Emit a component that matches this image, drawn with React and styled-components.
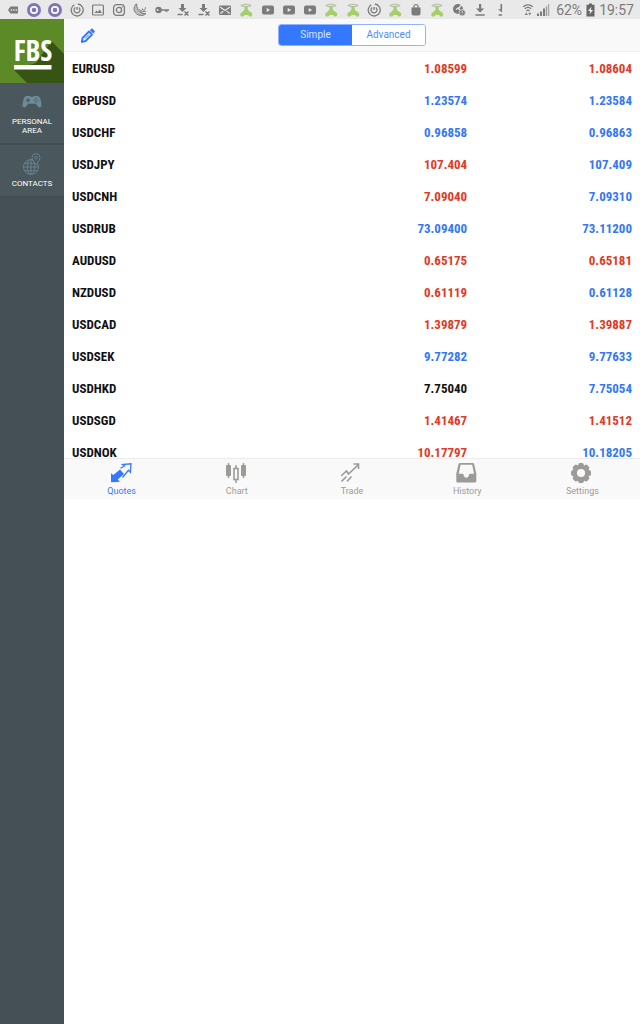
import { useState } from "react";
import styled, { createGlobalStyle } from "styled-components";

const GlobalStyle = createGlobalStyle`
  *, *::before, *::after {
    box-sizing: border-box;
  }
  body {
    margin: 0;
    background-color: #ffffff;
    font-family: Roboto, "Liberation Sans", sans-serif;
  }
  svg {
    display: block;
    flex: none;
  }
`;

const Page = styled.div`
  display: flex;
  flex-direction: column;
  width: 100%;
  min-height: 100vh;
`;

const StatusBar = styled.header`
  display: flex;
  align-items: center;
  height: 19px;
  padding: 0 6px;
  background-color: #e9e9e9;
  color: #7b7b7b;
`;

const Notifications = styled.div`
  display: flex;
  flex: 1;
  justify-content: space-between;
`;

const SystemInfo = styled.div`
  display: flex;
  align-items: center;
  gap: 4px;
  margin-left: 13px;
`;

const Reception = styled.div`
  display: flex;
  gap: 1px;
  padding-right: 2px;
`;

const SystemText = styled.span`
  font-size: 14px;
  line-height: 19px;
  padding-top: 1px;
`;

const Layout = styled.div`
  display: flex;
  flex: 1;
`;

const Sidebar = styled.nav`
  display: flex;
  flex-direction: column;
  flex: none;
  width: 64px;
  background-color: #445055;
`;

const Logo = styled.a`
  display: block;
  height: 64px;
`;

const SideLink = styled.a`
  display: flex;
  flex-direction: column;
  align-items: center;
  gap: 4px;
  padding: 8px 0;
  border-bottom: 2px solid #414d52;
  background-color: #4a585e;
  color: #ffffff;
  font-size: 8px;
  line-height: 9px;
  text-align: center;
  text-decoration: none;
`;

const Terminal = styled.main`
  display: flex;
  flex: 1;
  flex-direction: column;
  height: 480px;
  min-width: 0;
`;

const Toolbar = styled.div`
  display: grid;
  grid-template-columns: 1fr auto 1fr;
  align-items: center;
  height: 33px;
  padding: 0 16px;
  border-bottom: 1px solid #efefef;
  background-color: #f9f9f9;
`;

const EditButton = styled.button`
  justify-self: start;
  padding: 0;
  border: none;
  background: none;
  cursor: pointer;
`;

const Segmented = styled.div`
  display: flex;
  width: 148px;
  height: 22px;
  border: 1px solid #8fb4ff;
  border-radius: 3px;
  overflow: hidden;
`;

const Segment = styled.button`
  flex: 1;
  padding: 0;
  border: none;
  background-color: ${(props) => (props.$active ? "#3478ff" : "#ffffff")};
  color: ${(props) => (props.$active ? "#dbe7ff" : "#4f8aff")};
  font-family: inherit;
  font-size: 10px;
  line-height: 18px;
  cursor: pointer;
`;

const QuoteList = styled.div`
  flex: 1;
  min-height: 0;
  overflow: hidden;
`;

const QuoteTable = styled.table`
  width: 100%;
  table-layout: fixed;
  border-collapse: collapse;
  font-family: "Liberation Sans Narrow", "Roboto Condensed", Roboto, sans-serif;
  font-size: 13px;
  font-weight: 700;
  line-height: 16px;
`;

const SymbolCell = styled.th`
  width: 42%;
  height: 32px;
  padding: 1px 0 0 8px;
  color: #111111;
  text-align: left;
`;

const priceColors = { up: "#3478f6", down: "#e03a24", flat: "#111111" };

const PriceCell = styled.td`
  width: ${(props) => props.$width};
  padding: 1px ${(props) => props.$inset || "0"} 0 0;
  color: ${(props) => priceColors[props.$trend]};
  text-align: right;
`;

const TabBar = styled.nav`
  display: flex;
  flex: none;
  height: 41px;
  border-top: 1px solid #ececec;
  background-color: #f9f9f9;
`;

const Tab = styled.button`
  display: flex;
  flex: 1;
  flex-direction: column;
  align-items: center;
  gap: 1px;
  padding: 3px 0 0;
  border: none;
  background: none;
  color: ${(props) => (props.$active ? "#3478ff" : "#9c9b97")};
  font-family: inherit;
  font-size: 9px;
  line-height: 12px;
  cursor: pointer;
`;

const quotes = [
  ["EURUSD", "1.08599", "down", "1.08604", "down"],
  ["GBPUSD", "1.23574", "up", "1.23584", "up"],
  ["USDCHF", "0.96858", "up", "0.96863", "up"],
  ["USDJPY", "107.404", "down", "107.409", "up"],
  ["USDCNH", "7.09040", "down", "7.09310", "up"],
  ["USDRUB", "73.09400", "up", "73.11200", "up"],
  ["AUDUSD", "0.65175", "down", "0.65181", "down"],
  ["NZDUSD", "0.61119", "down", "0.61128", "up"],
  ["USDCAD", "1.39879", "down", "1.39887", "down"],
  ["USDSEK", "9.77282", "up", "9.77633", "up"],
  ["USDHKD", "7.75040", "flat", "7.75054", "up"],
  ["USDSGD", "1.41467", "down", "1.41512", "down"],
  ["USDNOK", "10.17797", "down", "10.18205", "up"],
];

/* status bar glyphs, all on a 14px grid */
const glyphs = {
  more: (
    <>
      <path d="M2 7 4.5 3.5H12v7H4.5Z" fill="currentColor" />
      <path d="M4.800 7h1.4M7.200 7h1.4M9.600 7h1.400" stroke="#e9e9e9" strokeWidth="1.4" />
    </>
  ),
  viber: (
    <>
      <circle cx="7" cy="7" r="7" fill="#8174b8" />
      <circle cx="7" cy="7" r="3.2" fill="none" stroke="#ffffff" strokeWidth="1.7" />
    </>
  ),
  power: (
    <g fill="none" stroke="currentColor" strokeWidth="1.3">
      <path d="M7.800 1a6 6 0 1 1-3.500.7" />
      <path d="M5.200 4.500a3 3 0 1 0 3.600 0M7 4v3" />
    </g>
  ),
  image: (
    <>
      <rect x="1.6" y="2" width="10.8" height="10" rx="1" fill="none" stroke="currentColor" strokeWidth="1.2" />
      <path d="m3.5 10 2-2.6 1.4 1.5 1.8-2.4L11 10Z" fill="currentColor" />
    </>
  ),
  camera: (
    <g fill="none" stroke="currentColor" strokeWidth="1.3">
      <rect x="1.6" y="1.6" width="10.8" height="10.8" rx="3" />
      <circle cx="7" cy="7" r="2.6" />
      <path d="M9.7 4.2h1" />
    </g>
  ),
  moon: (
    <g fill="none" stroke="currentColor" strokeWidth="1">
      <path d="M3.500.8C-.5 4 .5 10 5.500 12c3 1 6 .3 7.500-1.500C8 11.500 4 7.500 3.500.8Z" fill="currentColor" fillOpacity=".4" />
      <path d="M6.500 6c.5 2.500 3 2 3-.2 0 2 3 2 3-1.500M7 9.200l6-1" />
    </g>
  ),
  key: (
    <>
      <circle cx="3.500" cy="7" r="3.200" fill="currentColor" />
      <circle cx="2.600" cy="7" r=".9" fill="#e9e9e9" />
      <path d="M6 7h8M11.500 7v2" stroke="currentColor" strokeWidth="1.700" />
    </>
  ),
  failed: (
    <>
      <path d="M5 1h3v4h2.500l-4 4-4-4H5Z" fill="currentColor" />
      <path d="M1.500 11.500h5M8.500 8.500l4 4m0-4-4 4" fill="none" stroke="currentColor" strokeWidth="1.400" />
    </>
  ),
  mail: (
    <>
      <rect x="1" y="2.500" width="12" height="9.500" rx="1" fill="currentColor" />
      <path d="m2 4 5 3.500L12 4M2.300 10.500l3-2.300M11.700 10.500l-3-2.300" fill="none" stroke="#e9e9e9" strokeWidth="1.200" />
    </>
  ),
  rider: (
    <>
      <path d="M1.300 2.600C3 0 11 0 12.700 2.600 11 5 3 5 1.300 2.600Z" fill="#b4c4a4" />
      <path d="M4 2.300h6" stroke="#dfe6d9" />
      <path d="M5.300 4h3.200l.4 3 2.600 2c2.400.6 2.400 4.500 0 4.600-1.300 0-2-.8-2.400-1.600H5.500c-.4 1-1.200 1.600-2.400 1.600-2.400-.2-2.400-3.800.2-4.600l2.300-2.500Z" fill="#a5cf6b" />
    </>
  ),
  video: (
    <>
      <rect x="1" y="2.500" width="12" height="9" rx="2" fill="currentColor" />
      <path d="m5.700 5 3.500 2-3.500 2Z" fill="#e9e9e9" />
    </>
  ),
  bag: (
    <>
      <path d="M2.500 4.500h9v6a2 2 0 0 1-2 2h-5a2 2 0 0 1-2-2Z" fill="currentColor" />
      <path d="M5 5V3.500a2 2 0 0 1 4 0V5" fill="none" stroke="currentColor" strokeWidth="1.200" />
    </>
  ),
  disc: (
    <>
      <circle cx="6" cy="6" r="5" fill="currentColor" />
      <path d="M6 6 10 1.500M4 6.500 6 5l2 2" fill="none" stroke="#e9e9e9" strokeWidth="1.200" />
      <circle cx="10.200" cy="9.800" r="3.200" fill="currentColor" stroke="#e9e9e9" strokeWidth=".8" />
      <path d="M10.200 8v2M10.200 10.700v.8" stroke="#e9e9e9" />
    </>
  ),
  download: (
    <>
      <path d="M6 1h2.200v4.500h3L7.100 9.600 3 5.500h3Z" fill="currentColor" />
      <path d="M2.500 12h9.200" stroke="currentColor" strokeWidth="1.500" />
    </>
  ),
  partial: (
    <path d="M6.500 1h1.600v8.600L4 6.200h2.500ZM4.500 11.200h3.600v1.500H4.500Z" fill="currentColor" />
  ),
  wifi: (
    <>
      <path d="M2.200 3.700c2.700-2.500 6.900-2.500 9.600 0M3.800 5.800c1.900-1.700 4.500-1.700 6.400 0M5.400 7.800c1-.9 2.200-.9 3.200 0" fill="none" stroke="currentColor" strokeWidth="1.200" />
      <path d="m3.800 12 1.500-2.700L6.800 12ZM7.200 9.800h3l-1.500 2.700Z" fill="currentColor" />
    </>
  ),
  signal: (
    <>
      <path d="M1 10.500h2V13H1ZM4 8.500h2V13H4ZM7 5.500h2V13H7Z" fill="currentColor" />
      <path d="M9.800 3.200h1.400v9.800H9.800ZM12.200 1h1v12h-1Z" fill="#9a9a9a" />
    </>
  ),
};

const notifications = [
  "more", "viber", "viber", "power", "image", "camera", "moon", "key",
  "failed", "failed", "mail", "rider", "video", "video", "video", "rider",
  "rider", "power", "rider", "bag", "rider", "disc", "download", "partial",
];

const Glyph = ({ name }) => (
  <svg width="14" height="14" viewBox="0 0 14 14" aria-hidden="true">
    {glyphs[name]}
  </svg>
);

const BatteryIcon = () => (
  <svg width="9" height="14" viewBox="0 0 9 14" aria-hidden="true">
    <path d="M3 .5h3v1.300h2.500v11.700H.5V1.800H3Z" fill="#666666" />
    <path d="M5.500 3.500 2 8h2.200l-.7 3.500L7 6.900H4.800Z" fill="#f4f4f4" />
  </svg>
);

const LogoMark = () => (
  <svg width="64" height="64" viewBox="0 0 64 64" role="img" aria-label="FBS">
    <rect width="64" height="64" fill="#5c8a26" />
    <path d="M14 51 27 64h37V35L51.500 22 36 44Z" fill="#365414" />
    <text
      x="33"
      y="42"
      textAnchor="middle"
      fontFamily="'Open Sans Condensed', 'Roboto Condensed', 'Liberation Sans Narrow', 'Open Sans', sans-serif"
      fontWeight="700"
      fontSize="29"
      fill="#ffffff"
    >
      FBS
    </text>
    <rect x="14" y="46" width="37.500" height="4.500" fill="#ffffff" />
  </svg>
);

const GamepadIcon = () => (
  <svg width="20" height="22" viewBox="0 0 20 22" aria-hidden="true">
    <path
      d="M5 5h2.500c.8 0 1 .8 2.500.8s1.700-.8 2.500-.8H15c2 0 2.900 1.200 3.500 3.500.5 2 1.300 5 .8 6.800-.4 1.500-2.300 1.500-3.300.3l-2.200-2.800H6.200L4 15.600c-1 1.200-2.900 1.200-3.300-.3C.2 13.500 1 10.500 1.500 8.500 2.100 6.200 3 5 5 5Z"
      fill="#6b8b99"
    />
    <path d="M6 7.300v4M4 9.300h4" stroke="#4a585e" strokeWidth="1.300" />
    <g fill="#4a585e">
      <circle cx="14.200" cy="7.600" r=".8" />
      <circle cx="14.200" cy="11" r=".8" />
      <circle cx="12.500" cy="9.300" r=".8" />
      <circle cx="16" cy="9.300" r=".8" />
    </g>
  </svg>
);

const GlobeIcon = () => (
  <svg width="20" height="22" viewBox="0 0 20 22" aria-hidden="true">
    <g fill="none" stroke="#66818d" strokeWidth="1">
      <circle cx="9" cy="14" r="7.500" />
      <ellipse cx="9" cy="14" rx="3.700" ry="7.500" />
      <path d="M9 6.500v15M1.500 14h15M2.500 10.300h13M2.500 17.700h13" />
      <path
        d="M14 12C11.500 8 10 6.500 10 4.600a4 4 0 0 1 8 0c0 1.900-1.500 3.400-4 7.400Z"
        fill="#4a585e"
      />
      <circle cx="14" cy="4.600" r="1.300" />
    </g>
  </svg>
);

const PencilIcon = () => (
  <svg width="15" height="16" viewBox="0 0 15 16" aria-hidden="true">
    <path d="M1.800 14.800 2.500 11 9 4.500l3 3L5.600 14Z" fill="none" stroke="#3478ff" strokeWidth="1.800" strokeLinejoin="round" />
    <path d="m5 11.500 4-4" stroke="#3478ff" strokeWidth="1" />
    <path d="m9.800 3.200 1.300-1.300c.5-.5 1.100-.5 1.600 0l1.800 1.800c.5.500.5 1.100 0 1.600l-1.300 1.300Z" fill="#3478ff" />
    <path d="m1 15.800.6-3 2.300 2.300Z" fill="#3478ff" />
  </svg>
);

const QuotesIcon = () => (
  <svg width="22" height="22" viewBox="1 0 22 22" aria-hidden="true">
    <path d="M1 20.200v-9L3.300 13l6.700-5.500 4 4.500-6.300 5.500 2.300 2.200Z" fill="currentColor" />
    <path
      d="m10.500 6.300 4-2.300-2-1.500 8.500-.7-.6 8.500-2-2-5.900 7.200"
      fill="none"
      stroke="currentColor"
      strokeWidth="1.300"
    />
  </svg>
);

const ChartIcon = () => (
  <svg width="22" height="22" viewBox="1 0 22 22" aria-hidden="true">
    <path d="M3.500 1v15M18.500 1v15M11 3v4M11 17v4" stroke="currentColor" strokeWidth="1.500" />
    <rect x="1" y="3" width="5" height="11" rx="1" fill="currentColor" />
    <rect x="16" y="3" width="5" height="11" rx="1" fill="currentColor" />
    <rect x="9" y="6.500" width="4" height="11" fill="none" stroke="currentColor" strokeWidth="1.600" />
  </svg>
);

const TradeIcon = () => (
  <svg width="22" height="22" viewBox="1 0 22 22" aria-hidden="true">
    <path
      d="m1 14 5.500-5 2 3L18.500 2.500M13.500 2h5v5M1.500 19.500l5-5M7 19.500l4.500-5"
      fill="none"
      stroke="currentColor"
      strokeWidth="1.600"
    />
  </svg>
);

const HistoryIcon = () => (
  <svg width="22" height="22" viewBox="0 0 22 22" aria-hidden="true">
    <path
      fillRule="evenodd"
      d="M4.500 1h12c1 0 1.500.5 1.700 1.300L20.300 11.500V19c0 1-.6 1.500-1.500 1.500h-17C.900 20.500.3 20 .3 19v-7.500l2.200-9.200C2.700 1.500 3.500 1 4.500 1Zm.1 1.800L2.700 11.800h3.800c.5 0 .8.300 1 .8.300 2 1.300 3.200 2.800 3.200s2.500-1.200 2.800-3.200c.2-.5.5-.8 1-.8h3.900L16.200 2.800Z"
      fill="currentColor"
    />
  </svg>
);

const gearTeeth = [0, 45, 90, 135, 180, 225, 270, 315];

const SettingsIcon = () => (
  <svg width="22" height="22" viewBox="1 0 22 22" aria-hidden="true">
    <circle cx="11" cy="11" r="6.300" fill="none" stroke="currentColor" strokeWidth="4.500" />
    {gearTeeth.map((angle) => (
      <rect
        key={angle}
        x="8.300"
        y="1"
        width="5.400"
        height="4"
        rx="1.500"
        fill="currentColor"
        transform={`rotate(${angle} 11 11)`}
      />
    ))}
  </svg>
);

const tabs = [
  { label: "Quotes", Icon: QuotesIcon },
  { label: "Chart", Icon: ChartIcon },
  { label: "Trade", Icon: TradeIcon },
  { label: "History", Icon: HistoryIcon },
  { label: "Settings", Icon: SettingsIcon },
];

const App = () => {
  const [view, setView] = useState("Simple");
  const [tab, setTab] = useState("Quotes");

  return (
    <Page>
      <GlobalStyle />
      <StatusBar>
        <Notifications>
          {notifications.map((name, index) => (
            <Glyph key={index} name={name} />
          ))}
        </Notifications>
        <SystemInfo>
          <Reception>
            <Glyph name="wifi" />
            <Glyph name="signal" />
          </Reception>
          <SystemText>62%</SystemText>
          <BatteryIcon />
          <SystemText>19:57</SystemText>
        </SystemInfo>
      </StatusBar>
      <Layout>
        <Sidebar>
          <Logo href="#home">
            <LogoMark />
          </Logo>
          <SideLink href="#personal">
            <GamepadIcon />
            <span>
              PERSONAL
              <br />
              AREA
            </span>
          </SideLink>
          <SideLink href="#contacts">
            <GlobeIcon />
            <span>CONTACTS</span>
          </SideLink>
        </Sidebar>
        <Terminal>
          <Toolbar>
            <EditButton type="button" aria-label="Edit symbols">
              <PencilIcon />
            </EditButton>
            <Segmented>
              {["Simple", "Advanced"].map((name) => (
                <Segment
                  key={name}
                  type="button"
                  $active={view === name}
                  onClick={() => setView(name)}
                >
                  {name}
                </Segment>
              ))}
            </Segmented>
          </Toolbar>
          <QuoteList>
            <QuoteTable>
              <tbody>
                {quotes.map(([symbol, bid, bidTrend, ask, askTrend]) => (
                  <tr key={symbol}>
                    <SymbolCell scope="row">{symbol}</SymbolCell>
                    <PriceCell $width="28%" $trend={bidTrend}>{bid}</PriceCell>
                    <PriceCell $width="30%" $inset="8px" $trend={askTrend}>{ask}</PriceCell>
                  </tr>
                ))}
              </tbody>
            </QuoteTable>
          </QuoteList>
          <TabBar>
            {tabs.map(({ label, Icon }) => (
              <Tab
                key={label}
                type="button"
                $active={tab === label}
                onClick={() => setTab(label)}
              >
                <Icon />
                {label}
              </Tab>
            ))}
          </TabBar>
        </Terminal>
      </Layout>
    </Page>
  );
};

export default App;
